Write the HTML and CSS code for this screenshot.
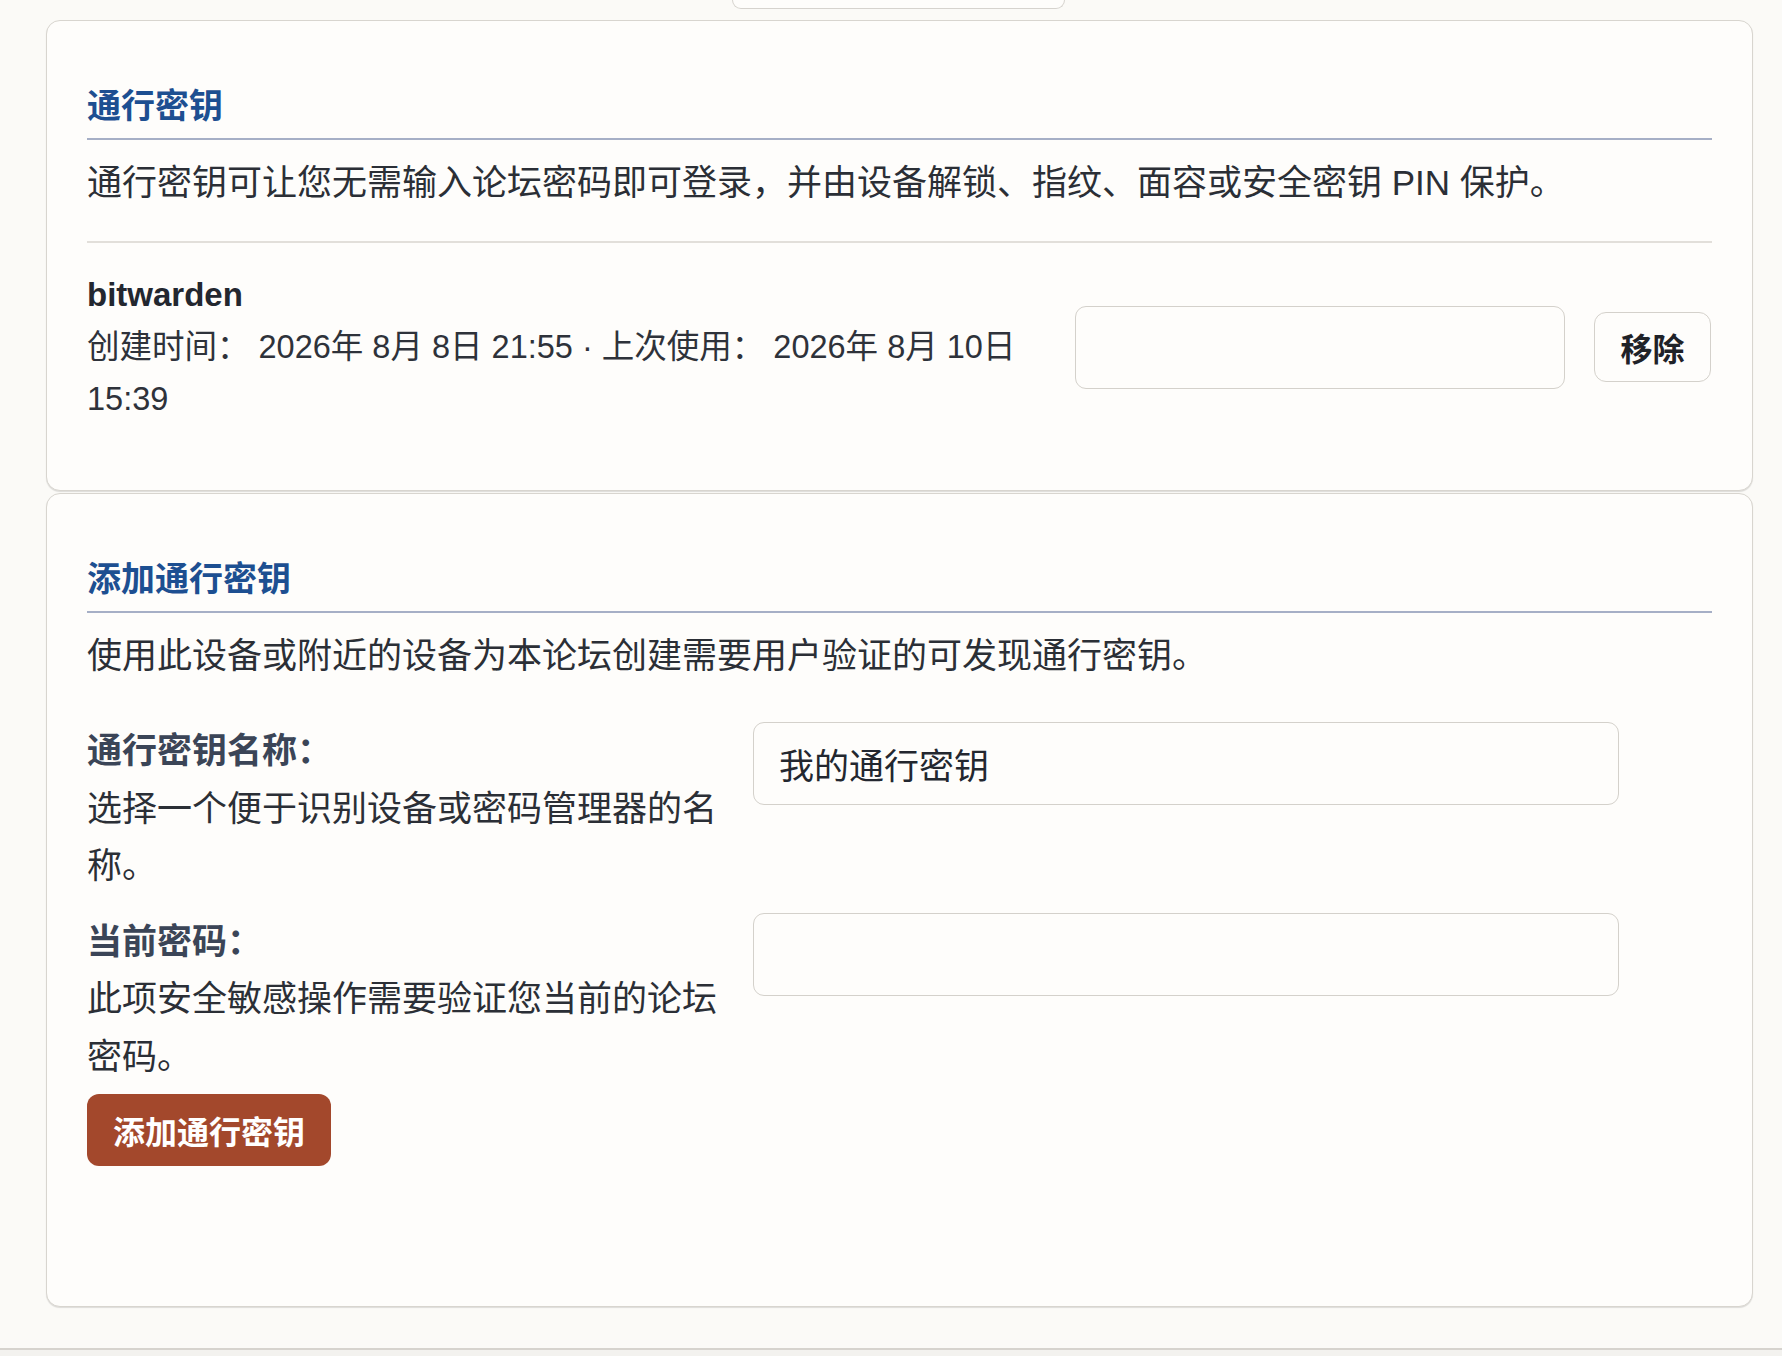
FILE: index.html
```html
<!DOCTYPE html>
<html lang="zh-CN">
<head>
    <meta charset="UTF-8">
    <meta name="viewport" content="width=device-width, initial-scale=1.0">
    <title>通行密钥</title>
    <link rel="stylesheet" href="styles.css">
</head>
<body>
    <div class="page">
        <div class="top-strip">
            <div class="select-tail"></div>
        </div>

        <div class="card">
            <h2 class="card-title">通行密钥</h2>
            <p class="card-desc">通行密钥可让您无需输入论坛密码即可登录，并由设备解锁、指纹、面容或安全密钥 PIN 保护。</p>
            <hr class="divider">
            <div class="passkey-row">
                <div class="passkey-info">
                    <div class="passkey-name">bitwarden</div>
                    <div class="passkey-meta">创建时间： 2026年 8月 8日 21:55 · 上次使用： 2026年 8月 10日 15:39</div>
                </div>
                <input type="text" class="passkey-rename" value="">
                <button class="btn-remove">移除</button>
            </div>
        </div>

        <div class="card">
            <h2 class="card-title">添加通行密钥</h2>
            <p class="card-desc">使用此设备或附近的设备为本论坛创建需要用户验证的可发现通行密钥。</p>
            <div class="add-form">
                <div class="form-row">
                    <div class="form-label">
                        <label for="passkeyName">通行密钥名称：</label>
                        <div class="form-hint">选择一个便于识别设备或密码管理器的名称。</div>
                    </div>
                    <input type="text" id="passkeyName" class="form-input" value="我的通行密钥">
                </div>
                <div class="form-row">
                    <div class="form-label">
                        <label for="currentPassword">当前密码：</label>
                        <div class="form-hint">此项安全敏感操作需要验证您当前的论坛密码。</div>
                    </div>
                    <input type="password" id="currentPassword" class="form-input">
                </div>
                <button class="btn-primary">添加通行密钥</button>
            </div>
        </div>
    </div>
    <div class="footer-bar"></div>
</body>
</html>
```

FILE: styles.css
```css
body {
    margin: 0;
    background-color: #fbfaf7;
    color: #2b2f36;
    font-family: "Liberation Sans", "Noto Sans CJK SC", sans-serif;
}
.page {
    padding-left: 46px;
    width: 1707px;
}
.top-strip {
    height: 9px;
}
.select-tail {
    margin-left: 686px;
    width: 331px;
    height: 8px;
    border: 1px solid #d6d3ce;
    border-top: none;
    border-radius: 0 0 12px 12px;
    background-color: #fefdfb;
}
.card {
    margin-top: 11px;
    background-color: #fefdfb;
    border: 1px solid #d8d5cf;
    border-radius: 14px;
    box-shadow: 0 1px 1px rgba(0, 0, 0, 0.12);
    padding: 40px 40px;
}
.card + .card {
    margin-top: 2px;
}
.card-title {
    margin: 23px 0 0 0;
    padding-bottom: 9px;
    border-bottom: 2px solid #a6afc6;
    color: #1d4f91;
    font-size: 34px;
    line-height: 45px;
    font-weight: bold;
}
.card-desc {
    margin: 17px 0 0 0;
    font-size: 35px;
    line-height: 52px;
    color: #2b2f36;
}
.divider {
    margin: 32px 0 0 0;
    border: none;
    border-top: 2px solid #e2dfda;
}
.passkey-row {
    display: flex;
    align-items: center;
    gap: 30px;
    margin: 26px 0 25px 0;
}
.passkey-info {
    flex: 1;
}
.passkey-name {
    font-size: 33px;
    line-height: 52px;
    font-weight: bold;
    color: #23272f;
}
.passkey-meta {
    font-size: 32.5px;
    line-height: 52px;
    color: #2e323a;
}
.passkey-rename {
    width: 490px;
    height: 83px;
    box-sizing: border-box;
    border: 1px solid #d4d1cb;
    border-radius: 11px;
    background-color: #fefdfb;
    margin-right: -1px;
}
.btn-remove {
    width: 117px;
    height: 70px;
    margin-right: 1px;
    border: 1px solid #d4d1cb;
    border-radius: 12px;
    background-color: #fefdfb;
    color: #1f2228;
    font-family: inherit;
    font-size: 32px;
    font-weight: bold;
    padding: 0;
    cursor: pointer;
}
.add-form {
    margin-top: 40px;
    margin-bottom: 100px;
}
.form-row {
    display: grid;
    grid-template-columns: 650px 866px;
    column-gap: 16px;
    align-items: start;
    margin-bottom: 18px;
}
.form-label {
    font-size: 35px;
    line-height: 57.5px;
}
.form-label label {
    display: block;
    font-weight: bold;
    color: #3b4557;
}
.form-hint {
    color: #2b2f36;
}
.form-input {
    height: 83px;
    box-sizing: border-box;
    border: 1px solid #d4d1cb;
    border-radius: 11px;
    background-color: #fefdfb;
    padding: 0 25px;
    font-family: inherit;
    font-size: 35px;
    color: #23272f;
}
.btn-primary {
    display: block;
    margin-top: -9px;
    width: 244px;
    height: 72px;
    border: none;
    border-radius: 12px;
    background-color: #a3482c;
    color: #fff;
    font-family: inherit;
    font-size: 32px;
    font-weight: bold;
    cursor: pointer;
}
.footer-bar {
    margin-top: 41px;
    height: 10px;
    border-top: 2px solid #d6d3ce;
    background-color: #f3f2ef;
}
```
